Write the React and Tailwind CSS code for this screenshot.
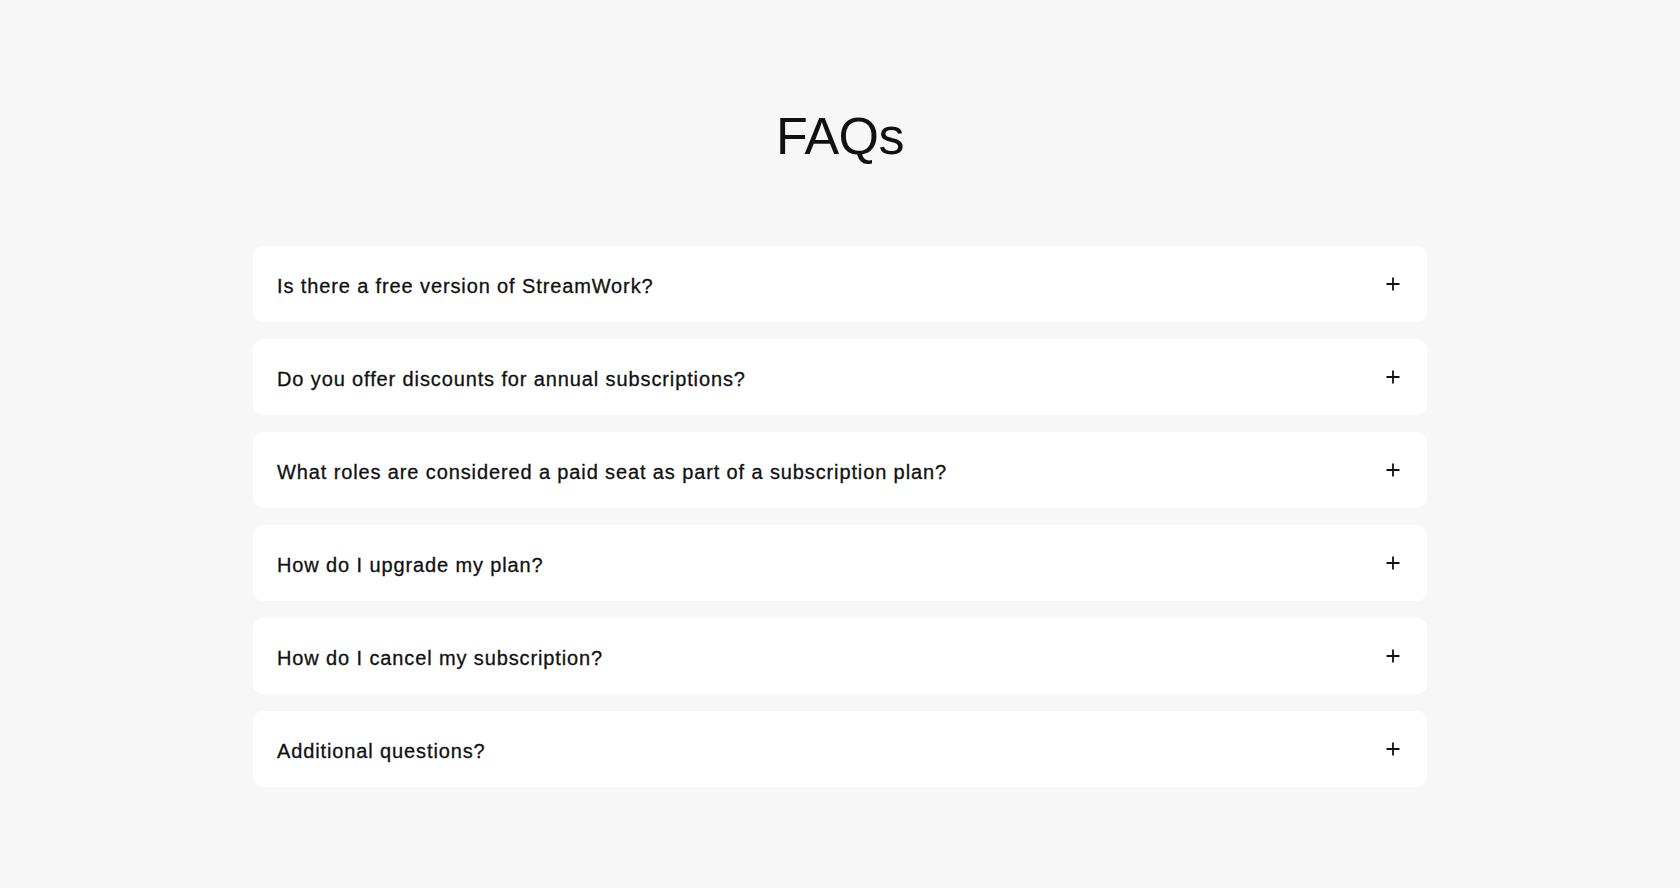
const faqs = [
  'Is there a free version of StreamWork?',
  'Do you offer discounts for annual subscriptions?',
  'What roles are considered a paid seat as part of a subscription plan?',
  'How do I upgrade my plan?',
  'How do I cancel my subscription?',
  'Additional questions?',
];

function PlusIcon() {
  return (
    <svg width="14" height="14" viewBox="0 0 14 14" fill="none" stroke="#111" strokeWidth="1.8">
      <path d="M7 0.5v13M0.5 7h13" />
    </svg>
  );
}

export default function App() {
  return (
    <div className="min-h-screen bg-[#f7f7f7] font-['Liberation_Sans',Arial,sans-serif] text-[#111]">
      <div className="pt-[110px] flex flex-col items-center">
        <h1 className="text-[52px] leading-[52px] font-normal tracking-[-0.5px]">FAQs</h1>
        <div className="mt-[84px] w-[1174px] flex flex-col gap-[17px]">
          {faqs.map((q) => (
            <button
              key={q}
              className="h-[76px] bg-white rounded-[10px] flex items-center justify-between pl-6 pr-[27px] text-left"
            >
              <span className="text-[20px] leading-[28px] pt-[3px] tracking-[0.88px] [-webkit-text-stroke:0.3px_#111]">{q}</span>
              <PlusIcon />
            </button>
          ))}
        </div>
      </div>
    </div>
  );
}
